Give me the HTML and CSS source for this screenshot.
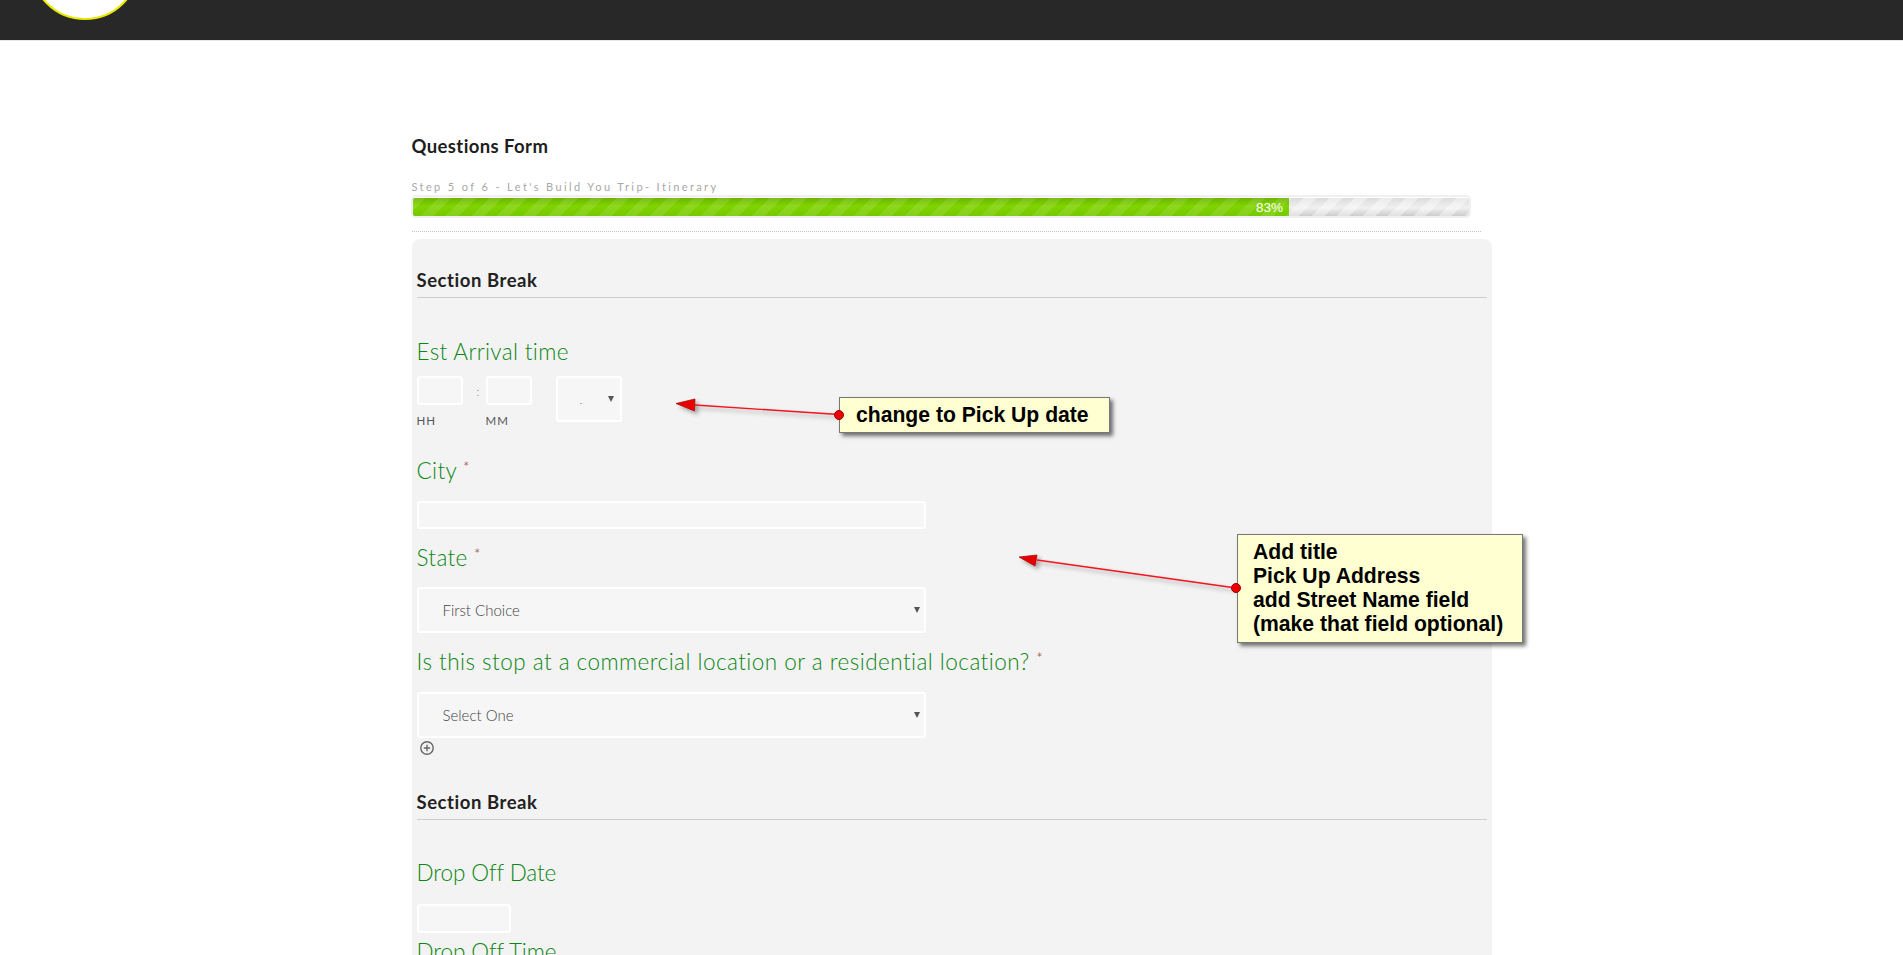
FILE: index.html
```html
<!DOCTYPE html>
<html lang="en">
<head>
<meta charset="utf-8">
<title>Questions Form</title>
<link rel="stylesheet" href="styles.css">
</head>
<body>
<header class="topbar">
  <div class="logo"><span class="logo-mark"></span><span class="logo-mark"></span></div>
</header>
<main class="wrap">
  <h1 class="form-title">Questions Form</h1>
  <div class="step">Step 5 of 6 - Let's Build You Trip- Itinerary</div>
  <div class="progress"><div class="progress-track"><div class="progress-fill"><span>83%</span></div></div></div>
  <div class="dotted"></div>
  <form class="panel">
    <h2 class="section">Section Break</h2>
    <div class="label label-first">Est Arrival time</div>
    <div class="time-row">
      <div class="time-col"><div class="input input-hh"></div><span class="sub">HH</span></div>
      <span class="colon">:</span>
      <div class="time-col"><div class="input input-mm"></div><span class="sub">MM</span></div>
      <div class="select select-ampm"><span class="dot">.</span></div>
    </div>
    <div class="label label-city">City <span class="req">*</span></div>
    <div class="input input-wide"></div>
    <div class="label label-state">State <span class="req">*</span></div>
    <div class="select select-wide">First Choice</div>
    <div class="label label-stop">Is this stop at a commercial location or a residential location? <span class="req">*</span></div>
    <div class="select select-wide select-stop">Select One</div>
    <svg class="plus" width="16" height="16" viewBox="0 0 16 16" aria-hidden="true"><circle cx="8" cy="8" r="6.2" fill="none" stroke="#666" stroke-width="1.4"/><path d="M4.8 8h6.4M8 4.800v6.400" stroke="#666" stroke-width="1.400"/></svg>
    <h2 class="section section-second">Section Break</h2>
    <div class="label label-drop">Drop Off Date</div>
    <div class="input input-date"></div>
    <div class="label label-time">Drop Off Time</div>
  </form>
</main>

<svg class="arrows" width="1903" height="955" viewBox="0 0 1903 955" aria-hidden="true">
  <defs>
    <filter id="sh" x="-30%" y="-100%" width="160%" height="300%"><feDropShadow dx="3" dy="3" stdDeviation="2" flood-color="#000" flood-opacity=".35"/></filter>
  </defs>
  <g filter="url(#sh)">
    <path d="M839 414.500 695 405" stroke="#f0141e" stroke-width="1.300" fill="none"/>
    <path d="M676 403.500 695 399 694.500 411Z" fill="#e80000" stroke="#a00000" stroke-width=".7"/>
    <path d="M1236 588 1037 560" stroke="#f0141e" stroke-width="1.300" fill="none"/>
    <path d="M1019 557 1037 555 1035 566Z" fill="#e80000" stroke="#a00000" stroke-width=".7"/>
  </g>
</svg>
<div class="note note-one">change to Pick Up date</div>
<div class="note note-two">Add title<br>Pick Up Address<br>add Street Name field<br>(make that field optional)</div>
<span class="pin pin-one"></span>
<span class="pin pin-two"></span>
</body>
</html>
```

FILE: styles.css
```css
html, body { margin: 0; padding: 0; height: 955px; overflow: hidden; background: #fff; }
body { font-family: "Lato", "Open Sans", sans-serif; color: #222; position: relative; }

.topbar { height: 41px; background: #272827; border-bottom: 1px solid #e8e8e8; box-sizing: border-box; position: relative; overflow: hidden; }
.logo { position: absolute; left: 30px; top: -90px; width: 110px; height: 110px; box-sizing: border-box; border-radius: 50%; background: #fff; border: 2px solid #e8e800; }
.logo-mark { position: absolute; top: 87px; width: 17px; height: 1px; background: #aaa; }
.logo-mark:first-child { left: 33px; }
.logo-mark:last-child { left: 58px; }

.wrap { width: 1080px; margin: 0 auto; }
.form-title { margin: 95px 0 0; font-size: 18.500px; line-height: 20px; font-weight: 700; letter-spacing: .4px; color: #1d1d1d; }
.step { margin-top: 25px; font-size: 11px; line-height: 12px; letter-spacing: 2.380px; color: #a8a8a8; font-weight: 400; }

.progress { margin: 2px 0 0 -1px; width: 1060px; height: 23px; box-sizing: border-box; border: 2px solid #f0f0f0; border-radius: 5px; padding: 1px 0; }
.progress-track { height: 18px; border-radius: 2px; overflow: hidden;
  background: repeating-linear-gradient(135deg, rgba(255,255,255,.4) 0 9px, rgba(255,255,255,0) 9px 18px), linear-gradient(#dcdcdc, #f0f0f0 55%, #cccccc); }
.progress-fill { width: 83%; height: 100%; text-align: right; box-sizing: border-box; padding-right: 6px;
  background: repeating-linear-gradient(135deg, rgba(255,255,255,.11) 0 9px, rgba(255,255,255,0) 9px 18px), linear-gradient(#6cb400, #80d400 45%, #76c800);
  color: #fff; font: 13.500px/19px "Liberation Sans", sans-serif; }

.dotted { margin-top: 13px; width: 1069px; border-top: 1px dotted #c4c4c4; }

.panel { margin-top: 7px; height: 760px; box-sizing: border-box; padding: 1px 5px 0; background: #f3f3f3; border-radius: 8px 8px 0 0; }
.section { margin: 29px 0 0; height: 28px; line-height: 22px; font-size: 18.500px; letter-spacing: .55px; font-weight: 700; color: #222; border-bottom: 1px solid #ccc; box-sizing: content-box; }
.section-second { margin-top: 35px; }

.label { font-size: 22.500px; line-height: 30px; font-weight: 300; color: #0c8614; letter-spacing: .35px; }
.label-first { margin-top: 39px; }
.label-city { margin-top: 12px; }
.label-state { margin-top: 10px; }
.label-stop { margin-top: 10px; letter-spacing: .46px; }
.label-drop { margin-top: 38px; letter-spacing: -.1px; }
.label-time { margin-top: 4px; letter-spacing: -.1px; }
.req { font-size: 15px; color: #8a2a18; vertical-align: 6px; }

.input, .select { box-sizing: border-box; border: 2px solid #fff; border-radius: 3px; background: #f6f6f6; }
.time-row { display: flex; align-items: flex-start; margin-top: 9px; height: 64px; }
.time-col { display: flex; flex-direction: column; }
.input-hh { width: 46px; height: 29px; }
.input-mm { width: 46px; height: 29px; }
.sub { margin-top: 9px; font-size: 11.500px; line-height: 14px; letter-spacing: 1px; color: #555; }
.colon { width: 23px; padding-left: 14px; box-sizing: border-box; margin-top: 8px; font-size: 12px; font-weight: 300; color: #777; }
.input-wide { margin-top: 15px; width: 509px; height: 28px; }
.input-date { margin-top: 16px; width: 94px; height: 29px; }

.select { position: relative; display: flex; align-items: center; font-size: 15px; color: #444; font-weight: 300; }
.select::after { content: ""; position: absolute; right: 4px; top: 50%; margin-top: -3px; border: 3.500px solid transparent; border-top: 6px solid #555; border-bottom: 0; }
.select-wide { margin-top: 14px; width: 509px; height: 46px; padding-left: 24px; }
.select-stop { margin-top: 15px; }
.select-ampm { width: 66px; height: 46px; margin-left: 24px; padding-left: 22px; }
.select-ampm::after { top: 18px; margin-top: 0; right: 6px; }
.dot { font-size: 12px; color: #a06020; }
.plus { display: block; margin: 2px 0 0 2px; }

.arrows { position: absolute; left: 0; top: 0; pointer-events: none; }
.note { position: absolute; box-sizing: border-box; background: #ffffd2; border: 1px solid #777; box-shadow: 3px 3px 4px rgba(0,0,0,.55); font: 700 21.150px/24px "Liberation Sans", Arial, sans-serif; color: #000; }
.note-one { left: 839px; top: 397px; width: 271px; height: 36px; line-height: 34px; padding-left: 16px; }
.note-two { left: 1237px; top: 534px; width: 286px; height: 109px; padding: 5px 0 0 15px; }
.pin { position: absolute; width: 10px; height: 10px; border-radius: 50%; background: #ee0000; border: 1px solid #900; box-sizing: border-box; }
.pin-one { left: 834px; top: 410px; }
.pin-two { left: 1231px; top: 583px; }
```
